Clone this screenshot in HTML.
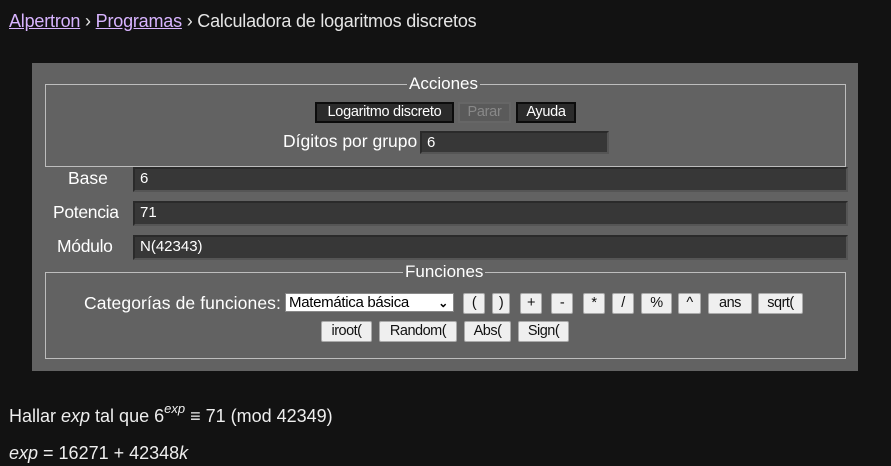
<!DOCTYPE html>
<html><head><meta charset="utf-8"><style>
*{box-sizing:border-box}
body{margin:0;width:891px;height:466px;background:#121212;color:#eee;font-family:"Liberation Sans",Arial,sans-serif;position:relative;overflow:hidden}
.a{position:absolute;white-space:nowrap}
a{color:#d8b4ff;text-decoration:underline}
.panel{position:absolute;left:32px;top:63px;width:826px;height:308px;background:#626262}
.fs{position:absolute;border:1px solid #bdbdbd}
.leg{position:absolute;background:#626262;padding:0 2px;font-size:17px;color:#fff;line-height:18px}
.inp{position:absolute;background:#373737;border:2px solid #2a2a2a;border-right-color:#555;border-bottom-color:#555;color:#fff;font-size:15px;padding-left:5px;line-height:20px}
.lbl{position:absolute;font-size:17.5px;color:#fff;white-space:nowrap}
.db{position:absolute;background:#2b2b2b;border:2px solid #0c0c0c;color:#fff;font-size:14.5px;line-height:17px;text-align:center;height:21px;white-space:nowrap;letter-spacing:-0.3px}
.lb{position:absolute;background:#efefef;border:1px solid #aaa;color:#111;font-size:14.5px;text-align:center;height:21px;line-height:19px;border-radius:2px;white-space:nowrap;letter-spacing:-0.5px;overflow:hidden}
</style></head><body>
<div class="a" style="left:9px;top:11px;font-size:18px;color:#e6e6e6;letter-spacing:-0.2px"><a>Alpertron</a> › <a>Programas</a> › Calculadora de logaritmos discretos</div>
<div class="panel"></div>
<div class="fs" style="left:45px;top:84px;width:801px;height:83px"></div>
<div class="leg" style="left:407px;top:75px">Acciones</div>
<div class="db" style="left:315px;top:102px;width:139px">Logaritmo discreto</div>
<div class="db" style="left:458px;top:102px;width:53px;background:#5a5a5a;border-color:#666;color:#888">Parar</div>
<div class="db" style="left:516px;top:102px;width:60px">Ayuda</div>
<div class="lbl" style="left:283px;top:131px">Dígitos por grupo</div>
<div class="inp" style="left:420px;top:131px;width:189px;height:23px">6</div>
<div class="lbl" style="left:68px;top:168px">Base</div>
<div class="inp" style="left:133px;top:167px;width:715px;height:25px">6</div>
<div class="lbl" style="left:53px;top:202px;letter-spacing:-0.3px">Potencia</div>
<div class="lbl" style="left:57px;top:236px;letter-spacing:-0.3px">Módulo</div>
<div class="inp" style="left:133px;top:201px;width:715px;height:25px">71</div>
<div class="inp" style="left:133px;top:235px;width:715px;height:25px">N(42343)</div>
<div class="fs" style="left:45px;top:272px;width:801px;height:87px"></div>
<div class="leg" style="left:403px;top:263px">Funciones</div>
<div class="lbl" style="left:84px;top:293px;letter-spacing:0.1px">Categorías de funciones:</div>
<div class="a" style="left:285px;top:293px;width:169px;height:19px;background:#fff;color:#000;font-size:15px;line-height:18px;padding-left:3px;border:1px solid #888;letter-spacing:-0.3px">Matemática básica<span style="position:absolute;right:5px;top:0;font-size:12px;font-weight:bold">&#x2304;</span></div>
<div class="lb" style="left:463px;top:293px;width:22px">(</div>
<div class="lb" style="left:492px;top:293px;width:18px">)</div>
<div class="lb" style="left:520px;top:293px;width:22px">+</div>
<div class="lb" style="left:551px;top:293px;width:22px">-</div>
<div class="lb" style="left:583px;top:293px;width:22px">*</div>
<div class="lb" style="left:612px;top:293px;width:22px">/</div>
<div class="lb" style="left:641px;top:293px;width:31px">%</div>
<div class="lb" style="left:678px;top:293px;width:23px">^</div>
<div class="lb" style="left:708px;top:293px;width:44px">ans</div>
<div class="lb" style="left:758px;top:293px;width:45px">sqrt(</div>
<div class="lb" style="left:321px;top:321px;width:51px">iroot(</div>
<div class="lb" style="left:379px;top:321px;width:78px">Random(</div>
<div class="lb" style="left:464px;top:321px;width:47px">Abs(</div>
<div class="lb" style="left:518px;top:321px;width:51px">Sign(</div>
<div class="a" style="left:9px;top:403px;font-size:18px;color:#eee">Hallar <i>exp</i> tal que 6<sup style="font-size:13px;position:relative;top:-2px"><i>exp</i></sup> ≡ 71 (mod 42349)</div>
<div class="a" style="left:9px;top:443px;font-size:18px;color:#eee"><i>exp</i> = 16271 + 42348<i>k</i></div>
</body></html>
